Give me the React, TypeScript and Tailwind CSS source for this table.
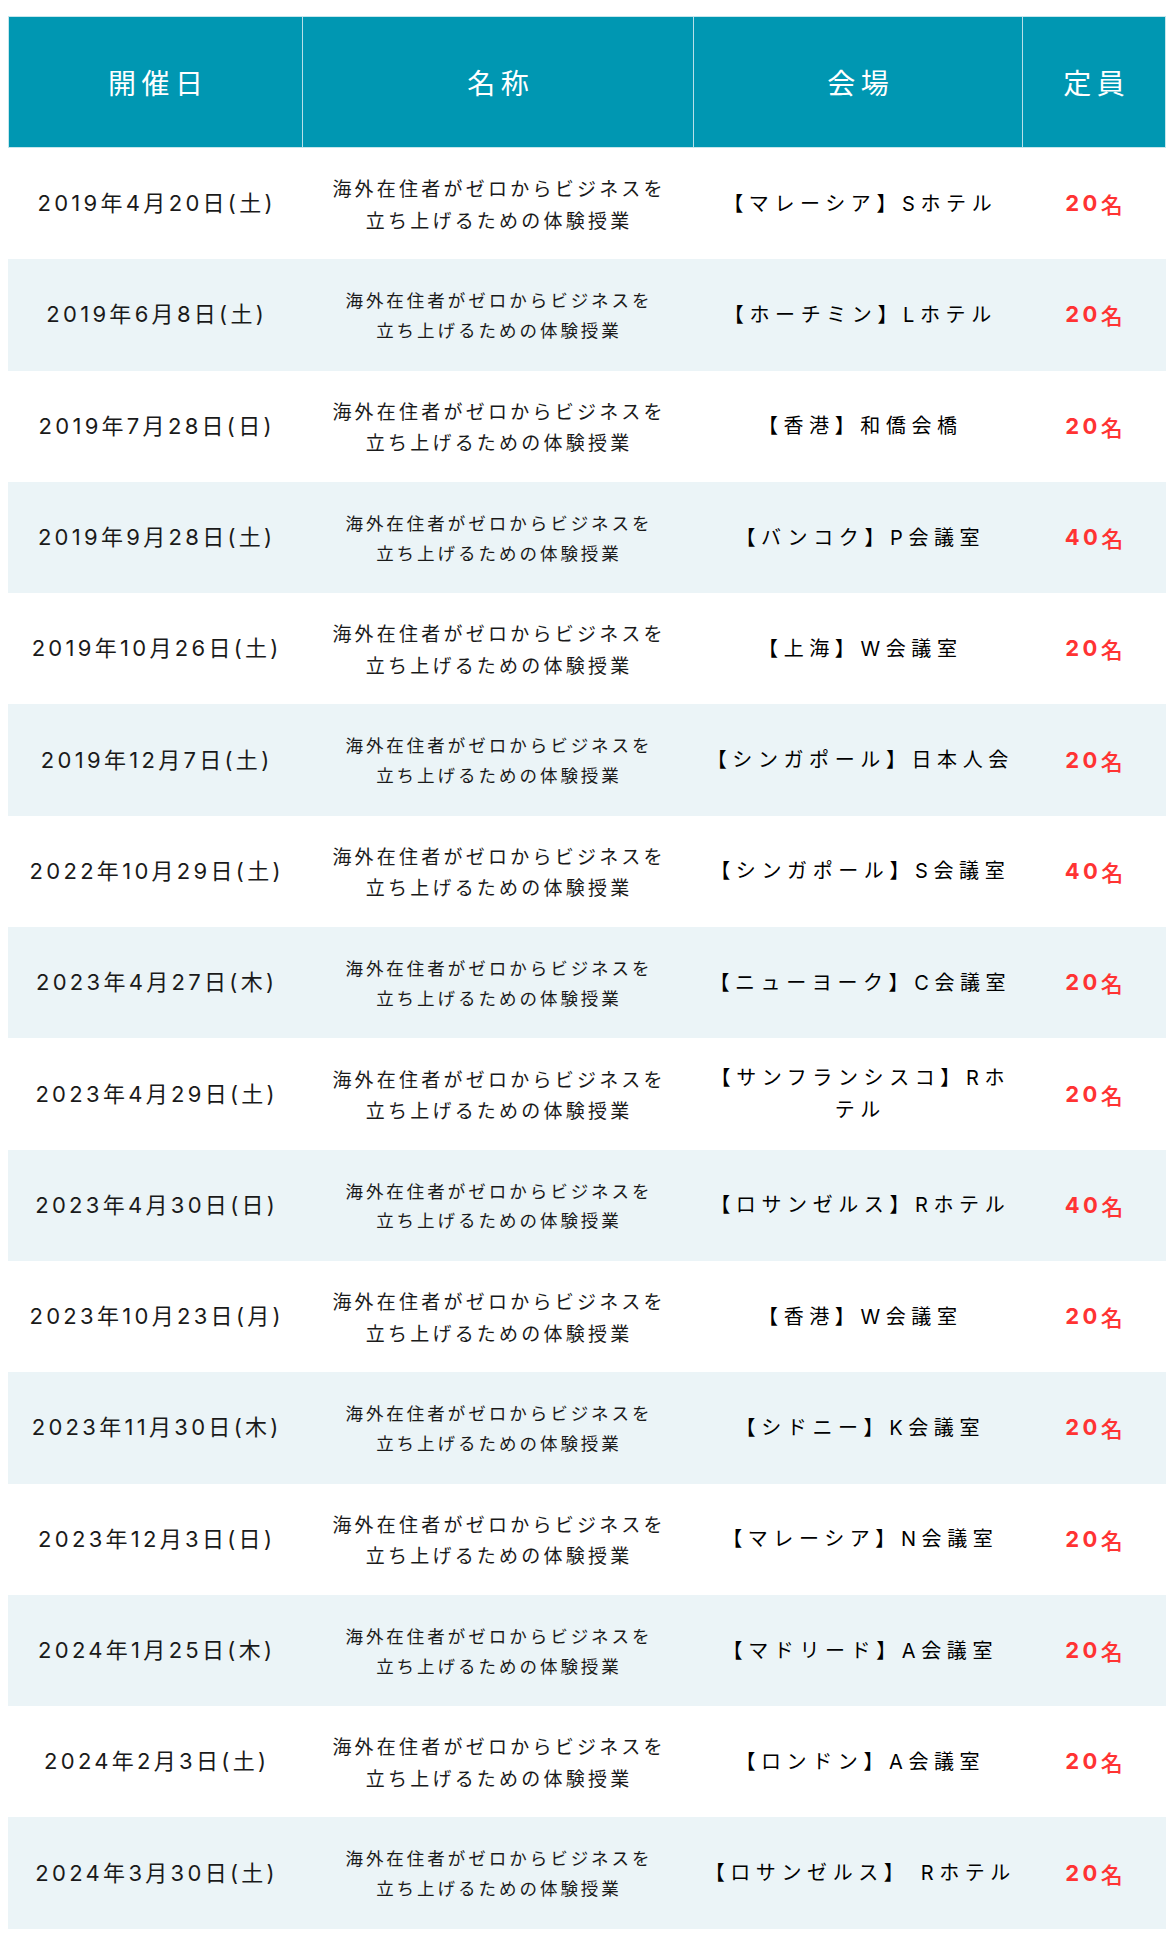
import React from "react";

type Row = { date: string; venue: React.ReactNode; cap: string };

const rows: Row[] = [
  { date: "2019年4月20日(土)", venue: "【マレーシア】Sホテル", cap: "20" },
  { date: "2019年6月8日(土)", venue: "【ホーチミン】Lホテル", cap: "20" },
  { date: "2019年7月28日(日)", venue: "【香港】和僑会橋", cap: "20" },
  { date: "2019年9月28日(土)", venue: "【バンコク】P会議室", cap: "40" },
  { date: "2019年10月26日(土)", venue: "【上海】W会議室", cap: "20" },
  { date: "2019年12月7日(土)", venue: "【シンガポール】日本人会", cap: "20" },
  { date: "2022年10月29日(土)", venue: "【シンガポール】S会議室", cap: "40" },
  { date: "2023年4月27日(木)", venue: "【ニューヨーク】C会議室", cap: "20" },
  {
    date: "2023年4月29日(土)",
    venue: (
      <>
        【サンフランシスコ】Rホ
        <br />
        テル
      </>
    ),
    cap: "20",
  },
  { date: "2023年4月30日(日)", venue: "【ロサンゼルス】Rホテル", cap: "40" },
  { date: "2023年10月23日(月)", venue: "【香港】W会議室", cap: "20" },
  { date: "2023年11月30日(木)", venue: "【シドニー】K会議室", cap: "20" },
  { date: "2023年12月3日(日)", venue: "【マレーシア】N会議室", cap: "20" },
  { date: "2024年1月25日(木)", venue: "【マドリード】A会議室", cap: "20" },
  { date: "2024年2月3日(土)", venue: "【ロンドン】A会議室", cap: "20" },
  { date: "2024年3月30日(土)", venue: "【ロサンゼルス】 Rホテル", cap: "20" },
];

const headers = ["開催日", "名称", "会場", "定員"];

export default function App() {
  return (
    <div className="min-h-[1950px] bg-white pl-2 pt-4 font-['Inter','Noto_Sans_CJK_JP',sans-serif]">
      <div className="w-[1158px]">
        <div className="grid h-[132px] grid-cols-[293px_391px_329px_143px] border border-[#c6e6ec] bg-[#0097b2] text-[28px] tracking-[0.2em] text-white">
          {headers.map((h, i) => (
            <div
              key={h}
              className={
                "flex items-center justify-center pl-[0.2em] font-['Noto_Sans_CJK_JP',sans-serif] font-normal " +
                (i > 0 ? "border-l border-[#b8e0e8]" : "")
              }
            >
              {h}
            </div>
          ))}
        </div>
        {rows.map((r, i) => {
          const shaded = i % 2 === 1;
          return (
            <div
              key={i}
              className={
                "grid h-[111.3px] grid-cols-[294px_391px_329px_144px] " +
                (shaded ? "bg-[#ebf4f7]" : "bg-white")
              }
            >
              <div className="flex items-center justify-center pl-[0.15em] text-[22px] tracking-[0.15em] text-[#1a1a1a]">
                {r.date}
              </div>
              <div
                className={
                  "flex items-center justify-center text-center font-['Noto_Sans_CJK_JP',sans-serif] text-[#1a1a1a] " +
                  (shaded
                    ? "pl-[0.17em] text-[17.5px] leading-[1.7] tracking-[0.17em]"
                    : "pl-[0.17em] text-[19px] leading-[1.65] tracking-[0.17em]")
                }
              >
                <p>
                  海外在住者がゼロからビジネスを
                  <br />
                  立ち上げるための体験授業
                </p>
              </div>
              <div className="flex items-center justify-center text-center text-[20px] leading-[1.6] tracking-[0.28em] text-black">
                <p className="whitespace-nowrap pl-[0.28em]">{r.venue}</p>
              </div>
              <div className="flex items-center justify-center pl-[0.15em] text-[22px] tracking-[0.15em] text-[#ff3333]">
                <span className="font-bold">{r.cap}</span>
                <span className="font-['Noto_Sans_CJK_JP',sans-serif] font-medium">名</span>
              </div>
            </div>
          );
        })}
      </div>
    </div>
  );
}
